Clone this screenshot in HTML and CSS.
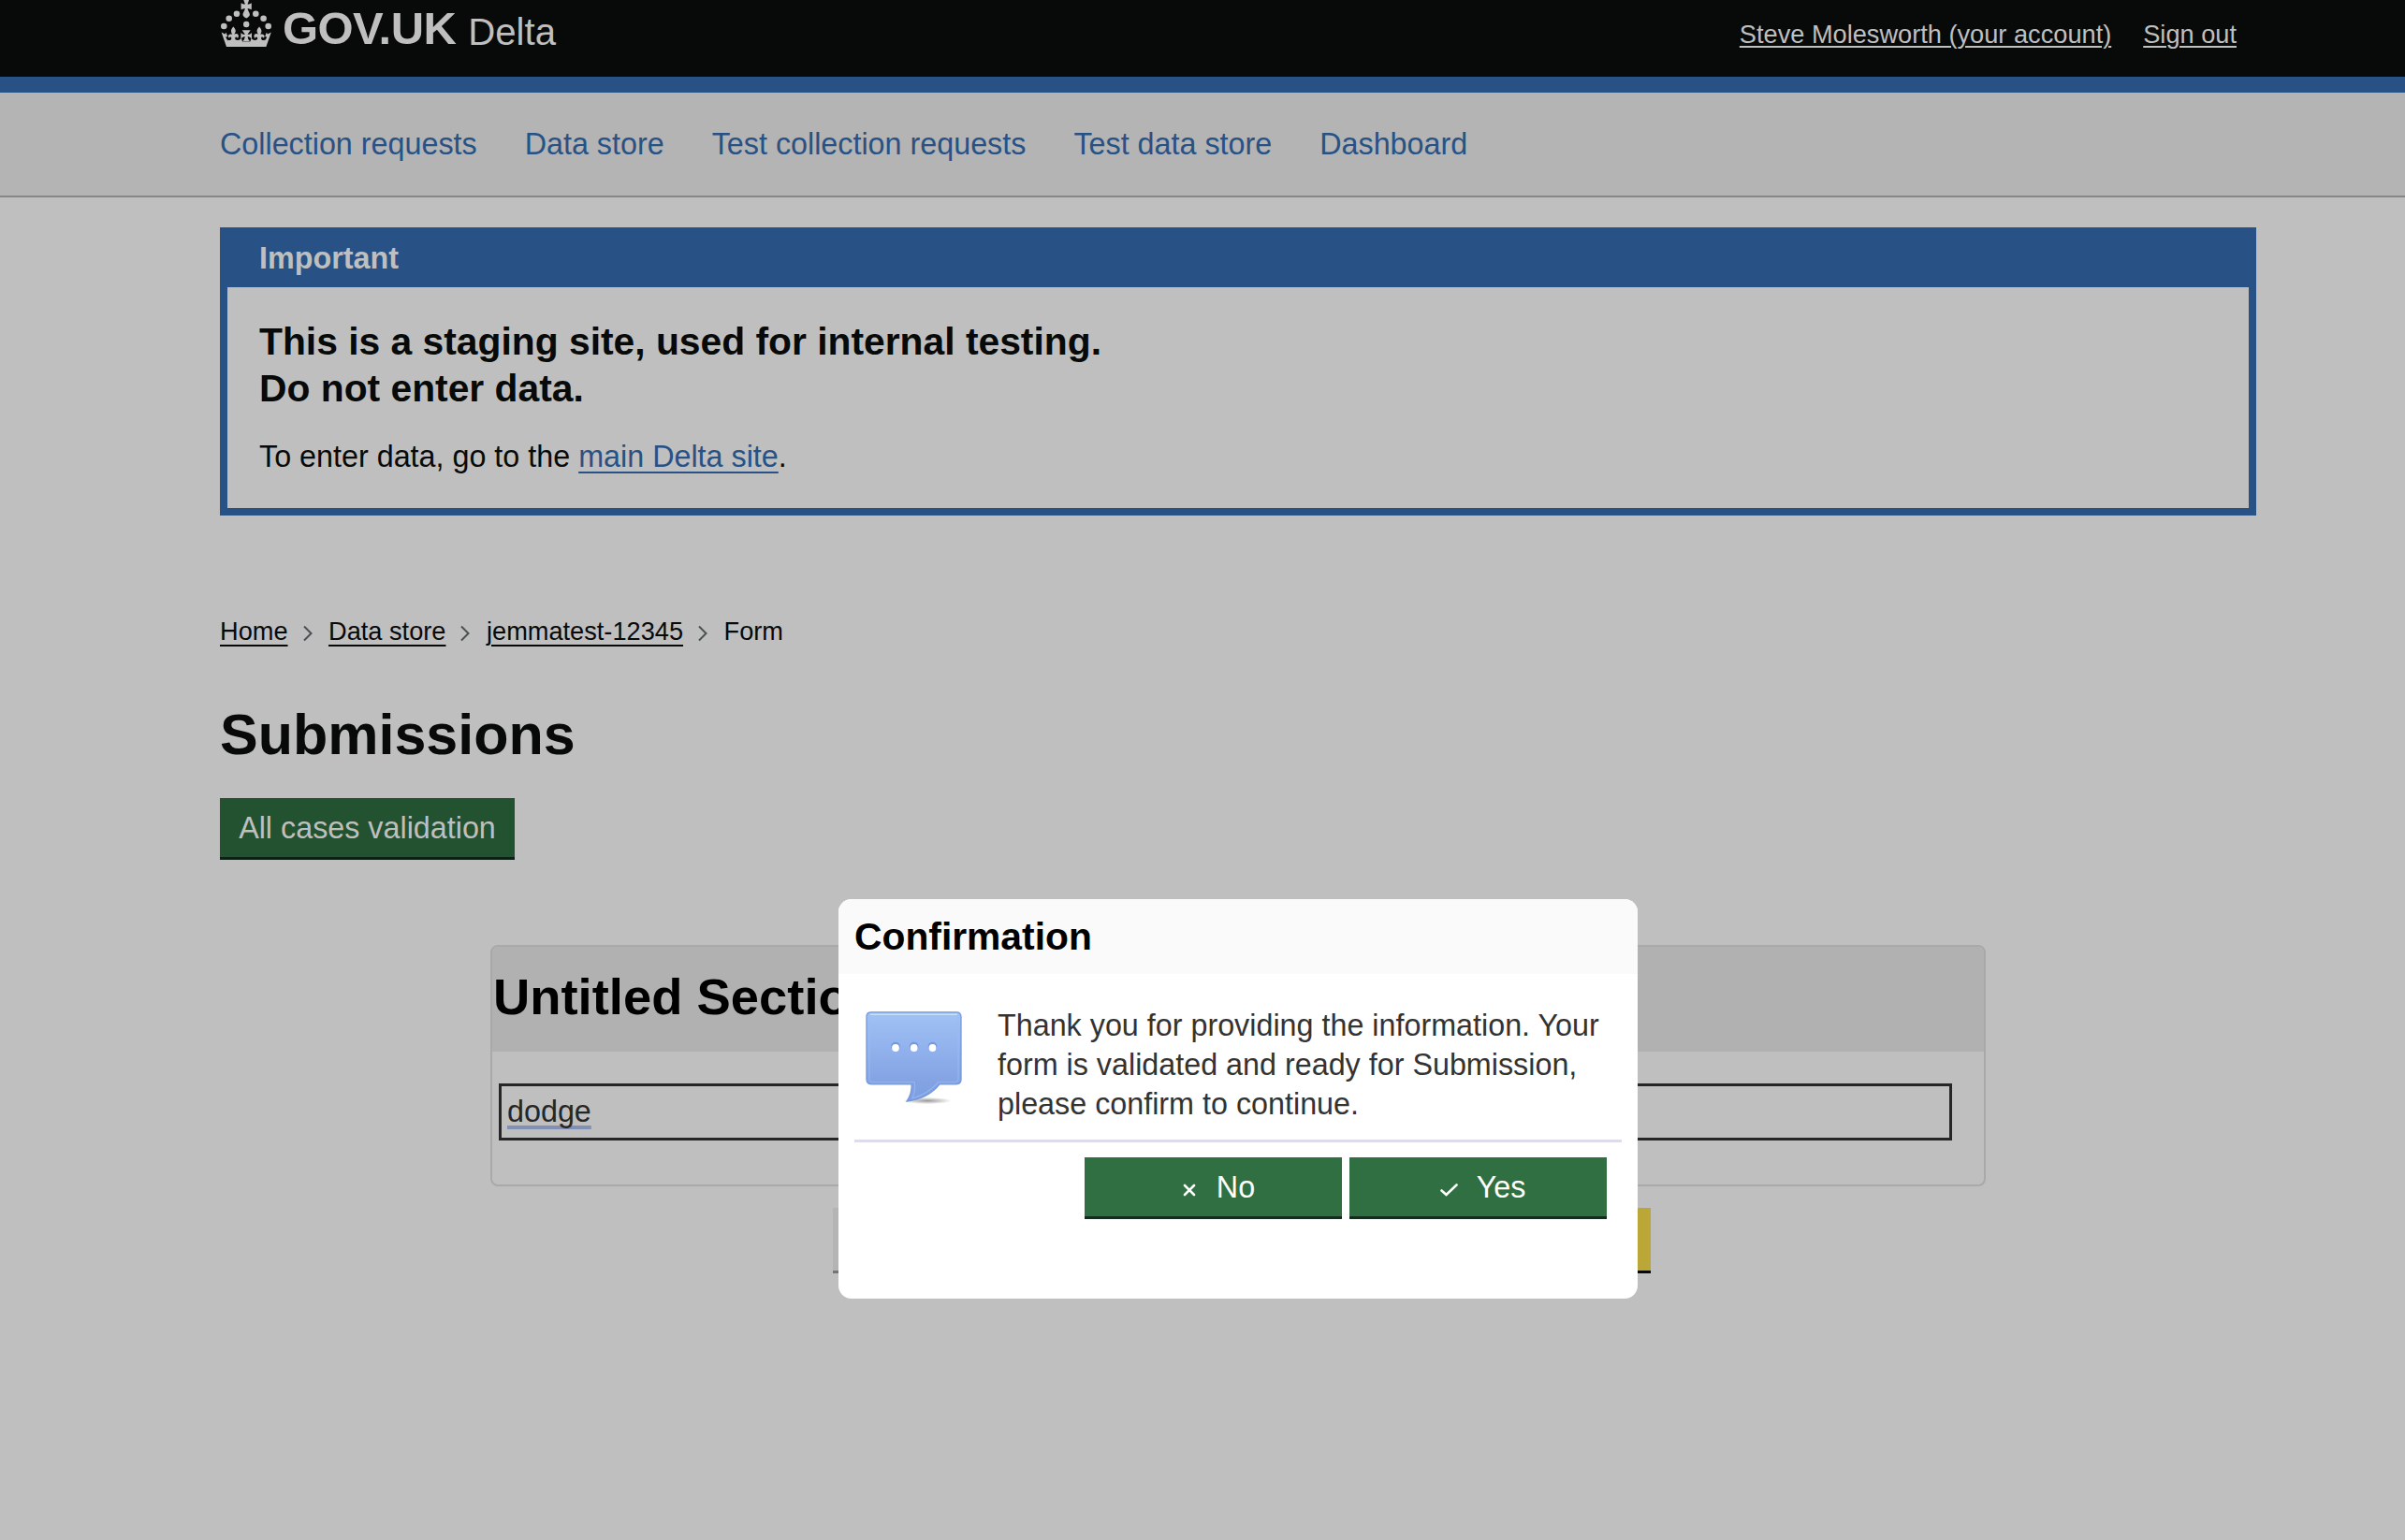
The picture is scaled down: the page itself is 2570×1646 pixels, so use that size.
FILE: index.html
```html
<!DOCTYPE html>
<html lang="en">
<head>
<meta charset="utf-8">
<title>Submissions - Delta</title>
<link rel="stylesheet" href="styles.css">
</head>
<body>
<header class="header">
  <div class="logo">
    <svg class="crown" viewBox="0 0 54 50" width="54" height="50" fill="#bfbfbf">
      <circle cx="3.300" cy="28" r="3.300"/><circle cx="8.700" cy="19.800" r="3.300"/><circle cx="17" cy="14.800" r="3.300"/>
      <circle cx="37.300" cy="14.800" r="3.300"/><circle cx="45.600" cy="19.800" r="3.300"/><circle cx="50.700" cy="28" r="3.300"/>
      <circle cx="27.200" cy="26" r="3.200"/>
      <path d="M24.300 0h5.800l-1.600 4.600c1.800-.1 3-.5 4.300-1.400v7c-1.500-.8-2.700-1.200-4.300-1.300.3 2.600 2.400 4.600 2.400 6.500 0 1.700-1.700 3.100-3.700 4.100-2-1-3.700-2.400-3.700-4.100 0-1.900 2.100-3.900 2.400-6.500-1.600.1-2.800.5-4.300 1.300v-7c1.300.9 2.500 1.300 4.300 1.400z"/>
      <path d="M6 50 .6 34.600l3.800 2 1.200-1.800 1.600 4.200-2 .6c1.200 3.200 3 5.200 5.300 5.200h33.400c2.300 0 4.100-2 5.300-5.200l-2-.6 1.600-4.200 1.200 1.800 3.800-2L48.400 50z"/>
      <path d="M13.300 28.500c3.200 3.200 3 5.400 1 8.300 1.500-1.300 4.500-.8 4.600 1.600.1 1.300-.5 2-1.300 2.300-.2-1.300-1.500-1.500-2.300-.4-.6 1.200.5 2.700 2.700 2.700 1.700 0 3.400-.8 3.700-2.700l1.600 5.200H8l-.6-3c1.800 1.200 3.900.4 3.900-1.500 0-1.700-1.600-2-2.300-.4-1.300-.6-1.500-2.100-.7-3.100.9-1.100 2.700-1.200 4-.7-2-2.900-1.800-5.200 1-8.300z"/>
      <path transform="matrix(-1 0 0 1 54.400 0)" d="M13.300 28.500c3.200 3.200 3 5.400 1 8.300 1.500-1.300 4.500-.8 4.600 1.600.1 1.300-.5 2-1.300 2.300-.2-1.300-1.500-1.500-2.300-.4-.6 1.200.5 2.700 2.700 2.700 1.700 0 3.400-.8 3.700-2.700l1.600 5.200H8l-.6-3c1.800 1.200 3.900.4 3.900-1.500 0-1.700-1.600-2-2.300-.4-1.300-.6-1.500-2.100-.7-3.100.9-1.100 2.700-1.200 4-.7-2-2.900-1.800-5.200 1-8.300z"/>
      <path d="M22.700 32.200h9l-3.200 4.600c1.800.2 3.200-.3 4.500-1.800v6.800c-1.300-1.700-2.800-2.600-4.300-2.700.2 3 1.200 4.500 3.500 5.500h-10c2.300-1 3.300-2.500 3.500-5.500-1.500.1-3 1-4.300 2.700V35c1.300 1.500 2.700 2 4.500 1.800z"/>
    </svg>
    <span class="brand">GOV.UK</span>
    <span class="product">Delta</span>
  </div>
  <div class="account">
    <a class="account-link">Steve Molesworth (your account)</a>
    <a class="account-link">Sign out</a>
  </div>
</header>
<nav class="nav">
  <a>Collection requests</a><a>Data store</a><a>Test collection requests</a><a>Test data store</a><a>Dashboard</a>
</nav>
<main class="main">
  <section class="banner">
    <h2 class="banner-title">Important</h2>
    <div class="banner-body">
      <p class="banner-heading">This is a staging site, used for internal testing.<br>Do not enter data.</p>
      <p class="banner-text">To enter data, go to the <a class="banner-link">main Delta site</a>.</p>
    </div>
  </section>
  <div class="breadcrumbs">
    <a>Home</a>
    <svg class="chevron" viewBox="0 0 10 18"><path d="M1 1.500 8.500 9 1 16.500"/></svg>
    <a>Data store</a>
    <svg class="chevron" viewBox="0 0 10 18"><path d="M1 1.500 8.500 9 1 16.500"/></svg>
    <a>jemmatest-12345</a>
    <svg class="chevron" viewBox="0 0 10 18"><path d="M1 1.500 8.500 9 1 16.500"/></svg>
    <span>Form</span>
  </div>
  <h1 class="title">Submissions</h1>
  <button class="btn validate">All cases validation</button>
  <section class="panel">
    <h2 class="panel-title">Untitled Section</h2>
    <div class="field"><span class="field-value">dodge</span></div>
  </section>
  <div class="actions"><span class="action-grey"></span><span class="action-yellow"></span></div>
</main>
<div class="dialog">
  <h2 class="dialog-title">Confirmation</h2>
  <div class="dialog-body">
    <svg class="bubble" viewBox="0 0 104 102" width="104" height="102">
      <defs>
        <linearGradient id="face" x1="0" y1="0" x2="0" y2="1"><stop offset="0" stop-color="#a0c2f5"/><stop offset=".8" stop-color="#82a2e3"/><stop offset="1" stop-color="#7c9ee0"/></linearGradient>
        <radialGradient id="shade"><stop offset="0" stop-color="#000" stop-opacity=".4"/><stop offset="1" stop-color="#000" stop-opacity="0"/></radialGradient>
      </defs>
      <ellipse cx="66" cy="95.500" rx="26" ry="3.600" fill="url(#shade)"/>
      <path d="M6 .8h91q5 0 5 5v67q0 5-5 5H79C71 88 60 94 44 96q6-9 5-18.200H6q-5 0-5-5v-67q0-5 5-5z" fill="url(#face)" stroke="#7598dc" stroke-width="1.300"/>
      <path d="M4 72V7q0-3.500 3.500-3.500h88Q99 3.500 99 7v65q0 3.500-3.500 3.500H78Q67 88 50 93q4-9 2-17.500H7.500Q4 75.500 4 72z" fill="none" stroke="#9dbcf0" stroke-width="1.200" opacity=".7"/>
      <path d="M5 3.200h93" stroke="#c5e0fb" stroke-width="1.600"/>
      <g fill="#7698df"><circle cx="32" cy="37.500" r="4.800"/><circle cx="51.700" cy="37.500" r="4.800"/><circle cx="71.500" cy="37.500" r="4.800"/></g>
      <g fill="#fff"><circle cx="32" cy="39" r="3.900"/><circle cx="51.700" cy="39" r="3.900"/><circle cx="71.500" cy="39" r="3.900"/></g>
    </svg>
    <p class="dialog-text">Thank you for providing the information. Your form is validated and ready for Submission, please confirm to continue.</p>
  </div>
  <div class="dialog-actions">
    <button class="btn choice"><svg class="mark" width="14" height="14" viewBox="0 0 14 14"><path d="M2 2l10 10M12 2L2 12"/></svg>No</button>
    <button class="btn choice choice-yes"><svg class="mark mark-check" width="19" height="14" viewBox="0 0 19 14"><path d="M1.500 7.500 6.500 12 17.500 1.500"/></svg>Yes</button>
  </div>
</div>
</body>
</html>
```
FILE: styles.css
```css
* { box-sizing: border-box; }
body { margin: 0; height: 1646px; overflow: hidden; position: relative; background: #bfbfbf; color: #080a09; font-family: "Liberation Sans", Arial, sans-serif; font-size: 32.3px; }
h1, h2, p { margin: 0; }
.header { height: 99px; padding: 0 180px 0 236px; background: #080a09; border-bottom: 17px solid #285285; display: flex; justify-content: space-between; color: #bfbfbf; }
.logo { display: flex; align-items: flex-start; }
.crown { display: block; }
.brand { font-weight: bold; font-size: 49px; line-height: 60px; letter-spacing: -0.600px; margin-left: 12px; }
.product { font-size: 40.200px; line-height: 69px; margin-left: 13px; }
.account { display: flex; gap: 34px; font-size: 27.200px; line-height: 74px; }
.account-link { text-decoration: underline; text-decoration-thickness: 2px; text-underline-offset: 3px; }
.nav { height: 112px; padding-left: 235px; display: flex; gap: 51px; background: #b4b4b4; border-bottom: 2px solid #878787; color: #285285; line-height: 110px; }
.main { padding: 32px 159px 0 235px; }
.banner { border: 8px solid #285285; border-top: 0; height: 308px; }
.banner-title { height: 64px; padding-left: 34px; background: #285285; color: #bfbfbf; font-size: 32.300px; line-height: 66px; }
.banner-body { padding: 33px 34px 0; }
.banner-heading { font-size: 40.800px; font-weight: bold; line-height: 50px; }
.banner-text { margin-top: 23px; line-height: 50px; }
.banner-link { color: #285285; text-decoration: underline; text-decoration-thickness: 2px; text-underline-offset: 5px; }
.breadcrumbs { margin-top: 105px; height: 40px; display: flex; align-items: flex-start; font-size: 27.200px; line-height: 38px; }
.breadcrumbs a { text-decoration: underline; text-decoration-thickness: 2px; text-underline-offset: 5px; }
.chevron { width: 10px; height: 18px; margin: 12px 17.500px 0 16px; fill: none; stroke: #4b5052; stroke-width: 2; }
.title { margin-top: 55px; font-size: 61px; line-height: 69px; }
.btn { display: flex; align-items: center; justify-content: center; border: 0; border-radius: 0; padding: 2px 0 0; height: 63px; font: 32.300px/61px "Liberation Sans", Arial, sans-serif; }
.validate { width: 315px; margin-top: 33px; background: #235230; color: #bfbfbf; box-shadow: 0 3px 0 #0d2016; }
.panel { margin: 94px 0 0 289px; width: 1598px; height: 258px; border: 2px solid #a9a9a9; border-radius: 8px; overflow: hidden; }
.panel-title { height: 112px; padding-left: 1px; background: #b1b1b1; color: #000; font-size: 54.400px; line-height: 108px; }
.field { margin: 34px 34px 0 7px; height: 61px; border: 3px solid #262626; padding-left: 6px; color: #262626; line-height: 55px; }
.field-value { text-decoration: underline; text-decoration-color: #8191b5; text-decoration-thickness: 4px; text-decoration-skip-ink: none; text-underline-offset: 4px; }
.actions { margin: 23px 0 0 655px; width: 874px; display: flex; justify-content: space-between; }
.action-grey, .action-yellow { width: 200px; height: 70px; border-bottom: 3px solid #757575; background: #b4b4b4; }
.action-yellow { background: #bba738; border-color: #080a09; }
.dialog { position: absolute; left: 896px; top: 961px; width: 854px; height: 427px; border-radius: 14px; background: #fff; overflow: hidden; }
.dialog-title { height: 80px; padding-left: 17px; background: #fafafa; color: #000; font-size: 40.800px; line-height: 80px; }
.dialog-body { margin: 0 17px; height: 180px; padding: 40px 0 0 12px; display: flex; border-bottom: 3px solid #dddbec; }
.bubble { flex: none; }
.dialog-text { margin: -6px 0 0 37px; width: 660px; color: #333; line-height: 42px; }
.dialog-actions { display: flex; justify-content: flex-end; gap: 8px; margin: 16px 33px 0 0; }
.choice { width: 275px; padding-left: 12px; background: #2f6f41; color: #fff; box-shadow: 0 3px 0 #132c1e; }
.choice-yes { padding-left: 10px; }
.mark { margin: 4px 22px 0 0; fill: none; stroke: #fff; stroke-width: 2.600; stroke-linecap: round; }
.mark-check { margin-right: 20px; }
```
